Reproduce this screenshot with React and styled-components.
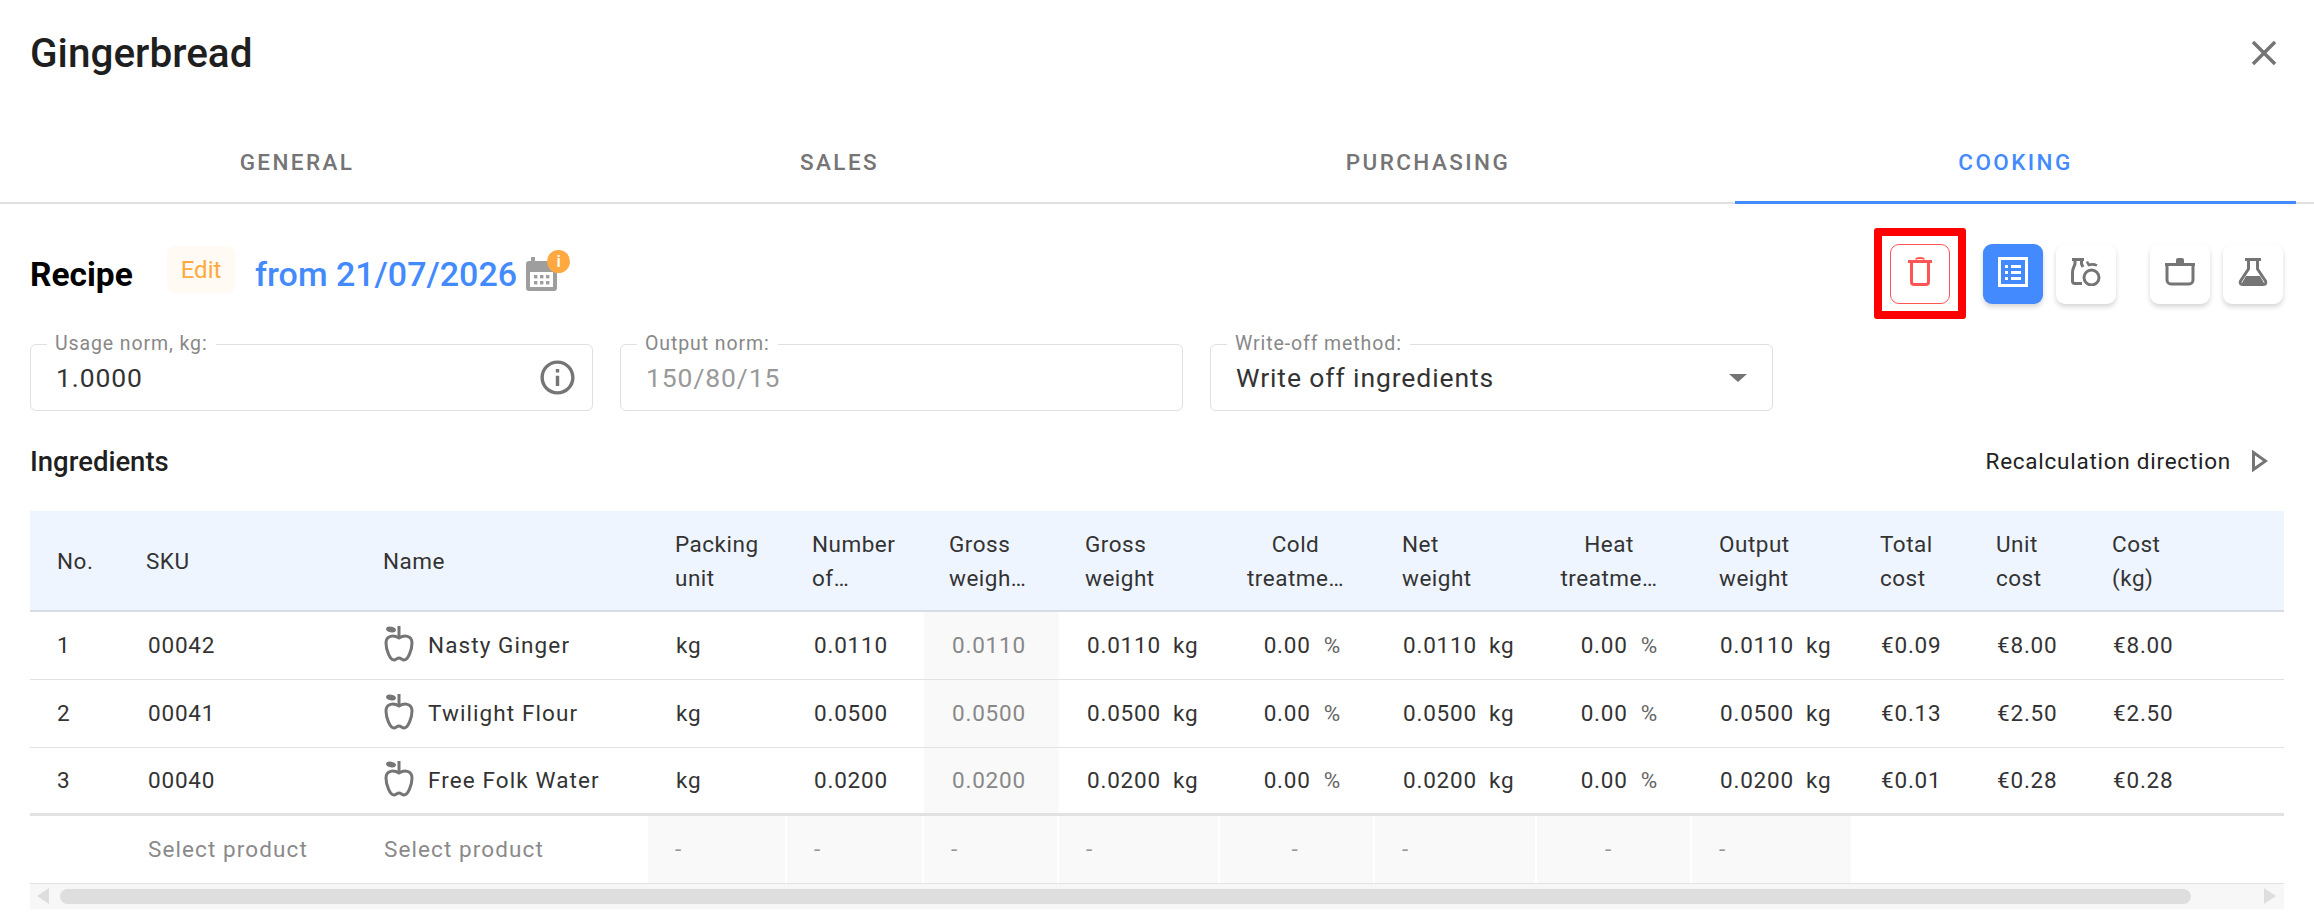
import React from "react";
import styled, { createGlobalStyle } from "styled-components";

const COLUMNS = "89px 238px 291px 139px 137px 135px 161px 155px 162px 155px 161px 116px 116px 116px 83px";

const rows = [
  { no: "1", sku: "00042", name: "Nasty Ginger", v: "0.0110", total: "€0.09", unit: "€8.00", h: 67.5 },
  { no: "2", sku: "00041", name: "Twilight Flour", v: "0.0500", total: "€0.13", unit: "€2.50", h: 68 },
  { no: "3", sku: "00040", name: "Free Folk Water", v: "0.0200", total: "€0.01", unit: "€0.28", h: 68.5 },
];

const heads = [
  { lines: ["No."] },
  { lines: ["SKU"] },
  { lines: ["Name"], pad: 26 },
  { lines: ["Packing", "unit"] },
  { lines: ["Number", "of…"], pad: 25 },
  { lines: ["Gross", "weigh…"], pad: 25 },
  { lines: ["Gross", "weight"], pad: 26 },
  { lines: ["Cold", "treatme…"], shift: 4 },
  { lines: ["Net", "weight"] },
  { lines: ["Heat", "treatme…"], shift: 11 },
  { lines: ["Output", "weight"] },
  { lines: ["Total", "cost"] },
  { lines: ["Unit", "cost"] },
  { lines: ["Cost", "(kg)"] },
  { lines: [] },
];

const Apple = () => (
  <AppleSvg viewBox="0 0 30 36" fill="none" stroke="#757575" strokeWidth="3">
    <path d="M15 0v11" />
    <ellipse cx="7" cy="3.5" rx="5" ry="2.8" fill="#757575" stroke="none" transform="rotate(12 7 3.5)" />
    <path d="M15 12C10 9 2 9 2 17c0 7 4 17 8 17 2 0 3-2 5-2s3 2 5 2c4 0 8-10 8-17 0-8-8-8-13-5z" />
  </AppleSvg>
);

const App = () => {
  return (
    <>
      <Global />
      <Page>
        <Header>
          <Title>Gingerbread</Title>
          <CloseIcon viewBox="0 0 24 24" fill="#757575">
            <path d="M19 6.41 17.59 5 12 10.59 6.41 5 5 6.41 10.59 12 5 17.59 6.41 19 12 13.41 17.59 19 19 17.59 13.41 12z" />
          </CloseIcon>
        </Header>

        <Tabs>
          <Tab $w={522}>GENERAL</Tab>
          <Tab $w={563}>SALES</Tab>
          <Tab $w={614}>PURCHASING</Tab>
          <Tab $w={561} $active>COOKING</Tab>
        </Tabs>

        <RecipeBar>
          <RecipeTitle>Recipe</RecipeTitle>
          <EditChip>Edit</EditChip>
          <DateText>from 21/07/2026</DateText>
          <CalendarWrap>
            <svg width="31" height="34" viewBox="0 0 31 34">
              <path d="M5 0h4v4h13v0h6a3 3 0 0 1 3 3v24a3 3 0 0 1-3 3H3a3 3 0 0 1-3-3V7a3 3 0 0 1 3-3h2z" fill="#9e9e9e" />
              <rect x="4" y="15" width="23" height="15" fill="#fff" />
              {[8, 14, 20].map((x) => (
                <g key={x} fill="#9e9e9e">
                  <rect x={x} y="18" width="3.4" height="3.4" />
                  <rect x={x} y="24" width="3.4" height="3.4" />
                </g>
              ))}
            </svg>
            <Badge>i</Badge>
          </CalendarWrap>

          <Actions>
            <DeleteButton>
              <svg width="30" height="32" viewBox="0 0 30 32" fill="none" stroke="#ff5555" strokeWidth="3">
                <path d="M3 6.500h24" />
                <path d="M11 4.500c0-2 8-2 8 0" strokeWidth="2" />
                <path d="M6.500 8v19c0 1.500 1 2.500 2.500 2.500h12c1.500 0 2.500-1 2.500-2.500V8" />
              </svg>
              <Frame />
            </DeleteButton>
            <IconButton $active $ml={33}>
              <svg width="30" height="30" viewBox="0 0 30 30">
                <path fill="#fff" fillRule="evenodd" d="M0 0h30v30H0zM3 3v24h24V3z" />
                <path fill="#fff" d="M7 8h3v3H7zM13 8h10v3H13zM7 14h3v3H7zM13 14h10v3H13zM7 20h3v3H7zM13 20h10v3H13z" />
              </svg>
            </IconButton>
            <IconButton $ml={13}>
              <svg width="30" height="28" viewBox="0 0 30 28" fill="none" stroke="#757575" strokeWidth="3">
                <path d="M1 1.500h12" />
                <path d="M4 2v4C3 9 1.500 11 1.500 14v9c0 1.500 1 2.500 2.500 2.500h7" />
                <path d="M10.500 2v4l1.500 3" />
                <circle cx="20.500" cy="19.500" r="7.500" />
                <path d="M16 3.500l2 4M17 7.500c3-1.500 6-1.500 9 0" strokeWidth="2.500" />
              </svg>
            </IconButton>
            <IconButton $ml={34}>
              <svg width="30" height="28" viewBox="0 0 30 28" fill="none" stroke="#757575" strokeWidth="3">
                <path d="M0 6.500h30" />
                <path d="M11 5V2a2 2 0 0 1 2-2h4a2 2 0 0 1 2 2v3z" fill="#757575" stroke="none" />
                <path d="M2 8v14c0 2.500 2 4 4 4h18c2 0 4-1.500 4-4V8" />
              </svg>
            </IconButton>
            <IconButton $ml={13}>
              <svg width="30" height="28" viewBox="0 0 30 28" fill="none" stroke="#757575" strokeWidth="3">
                <path d="M7 1.500h16" />
                <path d="M10.500 2v9L2.500 23c-1 2 0 3.500 2 3.500h21c2 0 3-1.500 2-3.500l-8-12V2" strokeLinejoin="round" />
                <path d="M8 18h14l4 7H4z" fill="#757575" stroke="none" />
              </svg>
            </IconButton>
          </Actions>
        </RecipeBar>

        <Fields>
          <Field>
            <FieldLabel>Usage norm, kg:</FieldLabel>
            <FieldValue>1.0000</FieldValue>
            <svg width="41" height="41" viewBox="0 0 24 24" fill="#757575">
              <path d="M11 7h2v2h-2zm0 4h2v6h-2zm1-9C6.480 2 2 6.480 2 12s4.480 10 10 10 10-4.480 10-10S17.520 2 12 2zm0 18c-4.410 0-8-3.590-8-8s3.590-8 8-8 8 3.590 8 8-3.590 8-8 8z" />
            </svg>
          </Field>
          <Field>
            <FieldLabel>Output norm:</FieldLabel>
            <FieldValue $muted>150/80/15</FieldValue>
          </Field>
          <Field>
            <FieldLabel>Write-off method:</FieldLabel>
            <FieldValue>Write off ingredients</FieldValue>
            <SelectArrow />
          </Field>
        </Fields>

        <SectionBar>
          <SectionTitle>Ingredients</SectionTitle>
          <Direction>
            Recalculation direction
            <svg width="16" height="22" viewBox="0 0 16 22" fill="none" stroke="#757575" strokeWidth="3">
              <path d="M1.500 2.500v17L13.500 11z" />
            </svg>
          </Direction>
        </SectionBar>

        <TableWrap>
          <HeadRow>
            {heads.map((h, i) => (
              <HeadCell key={i} $pad={h.pad} $shift={h.shift}>
                {h.lines.map((line) => (
                  <span key={line}>{line}</span>
                ))}
              </HeadCell>
            ))}
          </HeadRow>

          {rows.map((r, i) => (
            <BodyRow key={r.no} $h={r.h} $last={i === rows.length - 1}>
              <Cell>{r.no}</Cell>
              <Cell $pad={29}>{r.sku}</Cell>
              <Cell $tight>
                <Apple />
                {r.name}
              </Cell>
              <Cell $pad={28}>kg</Cell>
              <Cell $pad={27}>{r.v}</Cell>
              <Cell $pad={28} $shade>{r.v}</Cell>
              <Cell $pad={28}>{r.v}<Unit>kg</Unit></Cell>
              <Cell $end={34}>0.00<Unit $pct>%</Unit></Cell>
              <Cell $pad={28}>{r.v}<Unit>kg</Unit></Cell>
              <Cell $end={34}>0.00<Unit $pct>%</Unit></Cell>
              <Cell $pad={28}>{r.v}<Unit>kg</Unit></Cell>
              <Cell $pad={28}>{r.total}</Cell>
              <Cell $pad={28}>{r.unit}</Cell>
              <Cell $pad={28}>{r.unit}</Cell>
              <Cell />
            </BodyRow>
          ))}

          <AddRow>
            <Cell />
            <Cell $pad={29} $hint>Select product</Cell>
            <Cell $hint>Select product</Cell>
            {heads.slice(3, 11).map((h, i) => (
              <DashCell key={i} $shift={h.shift}>-</DashCell>
            ))}
          </AddRow>

          <Scrollbar>
            <ScrollArrow $left />
            <ScrollThumb />
            <ScrollArrow />
          </Scrollbar>
        </TableWrap>
      </Page>
    </>
  );
};

export default App;

const Global = createGlobalStyle`
  html, body {
    margin: 0;
    background: #fff;
  }
  * {
    box-sizing: border-box;
  }
`;

const Page = styled.div`
  width: 2314px;
  height: 916px;
  overflow: hidden;
  font-family: Roboto, "Liberation Sans", sans-serif;
  color: #333;
`;

const Header = styled.div`
  height: 120px;
  padding: 30px 29px 0 30px;
  display: flex;
  justify-content: space-between;
  align-items: flex-start;
`;

const Title = styled.h1`
  margin: 0;
  font-size: 40.500px;
  line-height: 46px;
  font-weight: 500;
  color: #1f1f1f;
`;

const CloseIcon = styled.svg`
  width: 42px;
  height: 42px;
  margin-top: 2px;
`;

const Tabs = styled.div`
  height: 84px;
  padding-left: 36px;
  display: flex;
  border-bottom: 2px solid #e0e0e0;
`;

const Tab = styled.div`
  width: ${(p) => p.$w}px;
  height: 84px;
  padding-top: 3px;
  display: flex;
  align-items: center;
  justify-content: center;
  font-size: 22.500px;
  font-weight: 500;
  letter-spacing: 2.400px;
  color: ${(p) => (p.$active ? "#448aff" : "#757575")};
  border-bottom: 3px solid ${(p) => (p.$active ? "#448aff" : "transparent")};
`;

const RecipeBar = styled.div`
  margin-top: 40px;
  height: 60px;
  padding: 0 31px 0 30px;
  display: flex;
  align-items: center;
`;

const RecipeTitle = styled.div`
  font-size: 33.500px;
  font-weight: 700;
  color: #000;
  width: 137px;
`;

const EditChip = styled.div`
  width: 68px;
  height: 47px;
  margin-bottom: 9px;
  border-radius: 8px;
  background: #fffaf3;
  color: #ffa940;
  font-size: 24px;
  display: flex;
  align-items: center;
  justify-content: center;
`;

const DateText = styled.div`
  margin-left: 20px;
  font-size: 34px;
  font-weight: 500;
  color: #448aff;
`;

const CalendarWrap = styled.div`
  position: relative;
  margin-left: 9px;
  height: 34px;
`;

const Badge = styled.div`
  position: absolute;
  top: -7px;
  left: 21px;
  width: 23px;
  height: 23px;
  border-radius: 50%;
  background: #ffa940;
  color: #fff;
  font-size: 17px;
  font-weight: 500;
  line-height: 23px;
  text-align: center;
`;

const Actions = styled.div`
  margin-left: auto;
  display: flex;
`;

const IconButton = styled.div`
  width: 60px;
  height: 60px;
  margin-left: ${(p) => p.$ml}px;
  border-radius: 9px;
  display: flex;
  align-items: center;
  justify-content: center;
  background: ${(p) => (p.$active ? "#448aff" : "#fff")};
  box-shadow: 0 3px 5px rgba(0, 0, 0, 0.16);

  svg {
    margin-bottom: 4px;
  }
`;

const DeleteButton = styled.div`
  position: relative;
  width: 60px;
  height: 60px;
  border: 1.5px solid #ff5555;
  border-radius: 9px;
  display: flex;
  align-items: center;
  justify-content: center;

  svg {
    margin-bottom: 6px;
  }
`;

const Frame = styled.div`
  position: absolute;
  top: -17.5px;
  left: -17.5px;
  width: 92px;
  height: 91px;
  border: 8px solid #f00;
  border-radius: 3px;
`;

const Fields = styled.div`
  margin-top: 40px;
  padding-left: 30px;
  display: flex;
  gap: 27px;
`;

const Field = styled.div`
  position: relative;
  width: 563px;
  height: 67px;
  padding: 0 14px 0 25px;
  border: 1.5px solid #e0e0e0;
  border-radius: 6px;
  display: flex;
  align-items: center;
  justify-content: space-between;
`;

const FieldLabel = styled.div`
  position: absolute;
  top: -11px;
  left: 16px;
  padding: 0 8px;
  background: #fff;
  font-size: 19.500px;
  line-height: 20px;
  letter-spacing: 0.9px;
  color: #888;
`;

const FieldValue = styled.div`
  font-size: 26.500px;
  letter-spacing: 0.9px;
  color: ${(p) => (p.$muted ? "#999" : "#333")};
`;

const SelectArrow = styled.div`
  margin-right: 11px;
  border-left: 9px solid transparent;
  border-right: 9px solid transparent;
  border-top: 8px solid #757575;
`;

const SectionBar = styled.div`
  height: 100px;
  padding: 0 46px 0 30px;
  display: flex;
  align-items: center;
  justify-content: space-between;
`;

const SectionTitle = styled.div`
  font-size: 27.500px;
  font-weight: 500;
  color: #1f1f1f;
`;

const Direction = styled.div`
  display: flex;
  align-items: center;
  gap: 21px;
  font-size: 22.500px;
  letter-spacing: 0.75px;
  color: #222;
`;

const TableWrap = styled.div`
  margin-left: 30px;
  width: 2254px;
`;

const HeadRow = styled.div`
  height: 101px;
  display: grid;
  grid-template-columns: ${COLUMNS};
  background: #eff5ff;
  border-bottom: 2px solid #d8dce4;
`;

const HeadCell = styled.div`
  padding: ${(p) => (p.$shift ? `0 ${p.$shift}px 0 0` : `0 0 0 ${p.$pad || 27}px`)};
  display: flex;
  flex-direction: column;
  justify-content: center;
  align-items: ${(p) => (p.$shift ? "center" : "flex-start")};
  font-size: 22.500px;
  line-height: 34px;
  letter-spacing: 0.5px;
  color: #333;
  white-space: nowrap;
`;

const BodyRow = styled.div`
  height: ${(p) => p.$h}px;
  display: grid;
  grid-template-columns: ${COLUMNS};
  border-bottom: ${(p) => (p.$last ? "3px" : "1.5px")} solid #e2e2e2;
`;

const Cell = styled.div`
  min-width: 0;
  padding-left: ${(p) => p.$pad || 27}px;
  padding-right: ${(p) => p.$end || 0}px;
  display: flex;
  align-items: center;
  justify-content: ${(p) => (p.$end ? "flex-end" : "flex-start")};
  gap: ${(p) => (p.$tight ? "14px" : "0")};
  background: ${(p) => (p.$shade ? "#f9f9f9" : "transparent")};
  font-size: 22.500px;
  letter-spacing: ${(p) => (p.$tight || p.$hint ? "1.1px" : "0.8px")};
  color: ${(p) => (p.$shade ? "#888" : p.$hint ? "#8a8a8a" : "#333")};
  white-space: nowrap;
`;

const Unit = styled.span`
  margin-left: ${(p) => (p.$pct ? "13px" : "12px")};
  color: ${(p) => (p.$pct ? "#666" : "#333")};
`;

const AppleSvg = styled.svg`
  width: 30px;
  height: 36px;
  flex: none;
  margin-bottom: 3px;
`;

const AddRow = styled.div`
  height: 67.500px;
  display: grid;
  grid-template-columns: ${COLUMNS};
  border-bottom: 1.5px solid #e2e2e2;
`;

const DashCell = styled.div`
  margin-right: 2px;
  padding: ${(p) => (p.$shift ? `0 ${p.$shift}px 0 0` : "0 0 0 27px")};
  display: flex;
  align-items: center;
  justify-content: ${(p) => (p.$shift ? "center" : "flex-start")};
  background: #f9f9f9;
  font-size: 22.500px;
  color: #999;
`;

const Scrollbar = styled.div`
  height: 25px;
  padding: 0 8px 0 7px;
  display: flex;
  align-items: center;
  background: #f7f7f7;
`;

const ScrollThumb = styled.div`
  flex: 1;
  height: 15px;
  margin: 0 73px 0 11px;
  border-radius: 8px;
  background: #dedede;
`;

const ScrollArrow = styled.div`
  width: 0;
  height: 0;
  border-top: 8px solid transparent;
  border-bottom: 8px solid transparent;
  ${(p) => (p.$left ? "border-right: 12px solid #dedede;" : "border-left: 12px solid #dedede;")}
`;
